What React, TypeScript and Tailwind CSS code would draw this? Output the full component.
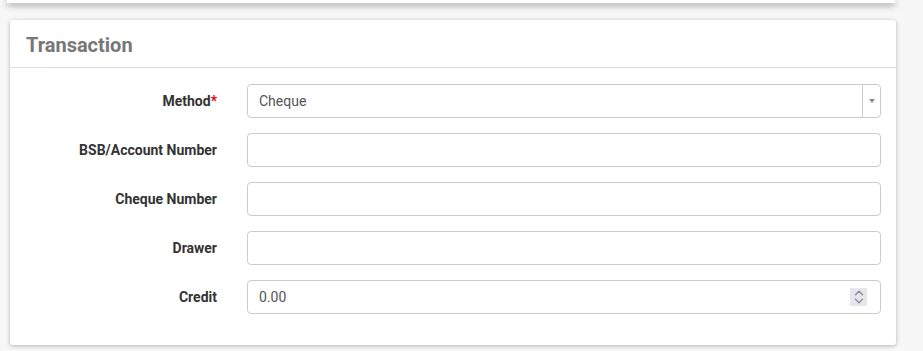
import { ChevronUp, ChevronDown } from 'lucide-react';

const fields = [
  { label: 'BSB/Account Number', value: '' },
  { label: 'Cheque Number', value: '' },
  { label: 'Drawer', value: '' },
];

function Label({ children, required }: { children: React.ReactNode; required?: boolean }) {
  return (
    <label className="w-[207px] shrink-0 text-right text-[14px] font-bold text-[#333]">
      {children}
      {required && <span className="text-[#e00]">*</span>}
    </label>
  );
}

export default function App() {
  return (
    <div className="min-h-screen bg-[#f7f7f7] font-['Roboto',sans-serif] overflow-hidden">
      <div className="mx-[7px] h-[3px] bg-white shadow-[0_2px_6px_rgba(0,0,0,0.5)] w-[888px]" />

      <section className="mt-[17px] ml-[10px] w-[886px] bg-white rounded-[3px] shadow-[0_1px_4px_rgba(0,0,0,0.28)]">
        <div className="h-[48px] border-b border-[#ddd] px-4 pt-[2px] flex items-center">
          <h2 className="text-[20px] font-bold text-[#777]">Transaction</h2>
        </div>

        <div className="pt-[16px] pb-[31px] pr-[15px] flex flex-col gap-[15px]">
          <div className="flex items-center gap-[30px]">
            <Label required>Method</Label>
            <div className="flex-1 h-[34px] border border-[#ccc] rounded-[4px] flex items-center">
              <span className="flex-1 pl-[11px] text-[14px] text-[#555]">Cheque</span>
              <div className="w-[18px] h-full border-l border-[#ccc] flex items-center justify-center">
                <span className="block w-0 h-0 border-l-[3px] border-r-[3px] border-t-[4px] border-l-transparent border-r-transparent border-t-[#888]" />
              </div>
            </div>
          </div>

          {fields.map((f) => (
            <div key={f.label} className="flex items-center gap-[30px]">
              <Label>{f.label}</Label>
              <input
                readOnly
                value={f.value}
                className="flex-1 h-[34px] border border-[#ccc] rounded-[4px] px-[11px] text-[14px] text-[#555] outline-none"
              />
            </div>
          ))}

          <div className="flex items-center gap-[30px]">
            <Label>Credit</Label>
            <div className="relative flex-1 h-[34px]">
              <input
                readOnly
                value="0.00"
                className="w-full h-full border border-[#ccc] rounded-[4px] px-[11px] text-[14px] text-[#555] outline-none"
              />
              <div className="absolute right-[14px] top-[8px] w-[17px] h-[18px] bg-[#e6e6ec] flex flex-col items-center justify-center text-[#8a8a96] overflow-hidden">
                <ChevronUp className="w-[14px] h-[14px] -mb-[3px] -mt-[3px]" strokeWidth={2.2} />
                <ChevronDown className="w-[14px] h-[14px] -mt-[3px] -mb-[3px]" strokeWidth={2.2} />
              </div>
            </div>
          </div>
        </div>
      </section>
    </div>
  );
}
